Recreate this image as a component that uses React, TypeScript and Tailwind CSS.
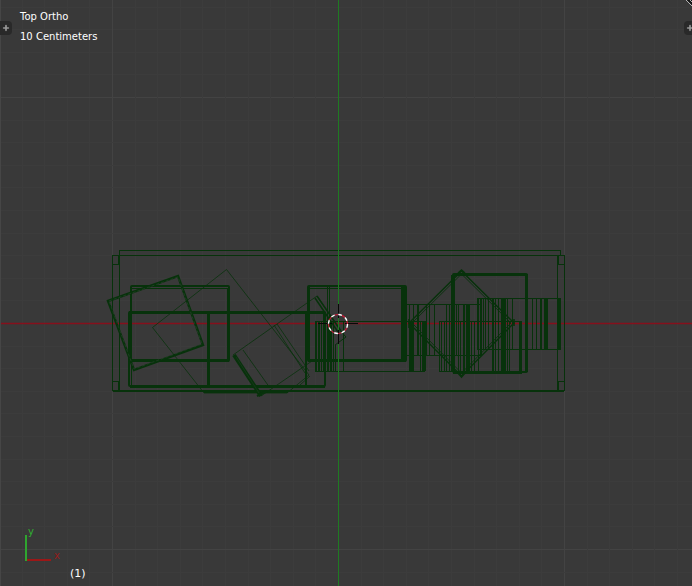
import { Plus } from 'lucide-react';

const WIRE = '#07320b';
const GRID = 22.6;
const CENTER = { x: 338.5, y: 323.5 };

type Box = [x: number, y: number, w: number, h: number];

const thinBoxes: Box[] = [
  [119.5, 250.5, 441, 5],
  [112.5, 255.5, 452, 135],
  [119.5, 255.5, 438, 135],
  [112.5, 255.5, 6, 9],
  [112.5, 381.5, 6, 9],
  [558.5, 255.5, 6, 9],
  [558.5, 381.5, 6, 9],
  [131.5, 288.5, 96, 71],
  [308.5, 288.5, 96, 71],
  [327.5, 286.5, 2, 74],
  [315.5, 321.5, 109, 50],
  [401.5, 304.5, 80, 51],
  [439.5, 321.5, 82, 50],
  [477.5, 298.5, 83, 51],
  [453.5, 275.5, 72, 97],
];

const thickBoxes: Box[] = [
  [131, 286, 98, 75],
  [129, 312, 196, 74],
  [308, 286, 98, 75],
  [453, 274, 74, 98],
];

// [x, top, bottom, width]
const bars: [number, number, number, number][] = [
  [208.5, 312, 386, 3],
  [131.5, 312, 386, 1],
  [305.5, 312, 386, 2],
  [309, 286, 361, 2],
  [403, 286, 361, 5],
  [316.5, 321, 371, 1],
  [318.5, 321, 371, 2],
  [321.5, 321, 371, 1],
  [324, 312, 371, 3],
  [327.5, 321, 371, 2],
  [330.5, 321, 371, 2],
  [333.5, 321, 371, 1],
  [335.5, 345, 371, 1],
  [343.5, 321, 371, 1],
  [406.5, 304, 356, 1],
  [409.5, 304, 371, 1],
  [412, 321, 371, 4],
  [413.5, 304, 356, 1],
  [417.5, 304, 356, 2],
  [420.5, 321, 371, 1],
  [424, 321, 371, 4],
  [426.5, 304, 356, 1],
  [429.5, 304, 356, 1],
  [434.5, 304, 356, 1],
  [441.5, 321, 371, 1],
  [444.5, 321, 371, 1],
  [446.5, 304, 371, 1],
  [449.5, 304, 371, 1],
  [452.5, 275, 371, 4],
  [456.5, 304, 356, 1],
  [458.5, 304, 371, 1],
  [460.5, 321, 371, 1],
  [464, 304, 371, 2],
  [467.5, 304, 371, 4],
  [471.5, 321, 371, 1],
  [474.5, 321, 371, 1],
  [478.5, 298, 371, 1],
  [480.5, 298, 356, 2],
  [483.5, 298, 349, 1],
  [485.5, 298, 349, 1],
  [488.5, 298, 349, 1],
  [492.5, 298, 371, 2],
  [495.5, 298, 371, 1],
  [498.5, 298, 371, 1],
  [501.5, 298, 371, 2],
  [504, 298, 371, 3],
  [507.5, 298, 371, 1],
  [512.5, 298, 349, 1],
  [509.5, 321, 371, 1],
  [520.5, 321, 371, 3],
  [526, 274, 372, 3],
  [532.5, 298, 349, 1],
  [536.5, 298, 349, 1],
  [540.5, 298, 349, 2],
  [544.5, 298, 349, 2],
  [547, 298, 349, 2],
  [558.5, 298, 349, 3],
];

function Grid() {
  const steps = Array.from({ length: 49 }, (_, i) => i - 24).filter((n) => n !== 0);
  return (
    <g shapeRendering="crispEdges">
      {steps.map((n) => (
        <g key={n} fill={n % 10 === 0 ? '#434343' : '#3c3c3c'}>
          <rect x={Math.floor(CENTER.x + n * GRID)} y="-300" width="1" height="1200" />
          <rect x="-300" y={Math.floor(CENTER.y + n * GRID)} width="1300" height="1" />
        </g>
      ))}
    </g>
  );
}

function Wireframe() {
  return (
    <g fill="none" stroke={WIRE}>
      <g shapeRendering="crispEdges">
        {thinBoxes.map(([x, y, width, height], i) => (
          <rect key={i} x={x} y={y} width={width} height={height} />
        ))}
        {bars.map(([x, top, bottom, width], i) => (
          <path key={i} d={`M${x} ${top}V${bottom}`} strokeWidth={width} />
        ))}
        <path d="M113 391H564" strokeWidth="2" />
        <path d="M129 312.500H325M130 360.500H229M308 360.500H406M130 386H325M453 372H522" strokeWidth="3" />
      </g>
      {thickBoxes.map(([x, y, width, height], i) => (
        <rect key={i} x={x} y={y} width={width} height={height} rx="1" strokeWidth="2" />
      ))}

      {/* tilted box on the left */}
      <path d="M108 301L178 276L203 345L134 370Z" strokeWidth="2.4" />
      <path d="M109 301L178 277L202 344L134 369Z" stroke="#2a402c" strokeWidth="0.7" strokeDasharray="3 2" />

      {/* large thin box and the narrow one leaning on it */}
      <path d="M226.500 269.500L152.500 327.500L204 393H287L309 375L226.500 269.500" strokeWidth="0.8" />
      <path d="M233 355L277 324L317 296L343 334M277 324L309 371M274 325L305 373M243 350L270 388M261 396L312 361M310 376L300 385" strokeWidth="0.8" />
      <path d="M204 392.500H288" />
      <path d="M234 355L261 396" strokeWidth="4" />
      <path d="M236 357L259 393" stroke="#1d3a20" strokeWidth="0.7" />
      <path d="M257 396L267 391" strokeWidth="2" />
      <path d="M317 296L341 331M315 298L338 332" strokeWidth="1.5" />
      <path d="M335 345L346 337L339 329" />

      {/* diamond on the right */}
      <path d="M461.500 271L409 323L461.500 376L514 323Z" strokeWidth="1.4" />
      <path d="M461.500 274L412 323L461.500 373L511 323Z" strokeWidth="0.9" />
      <path d="M458 273L461.500 270L465 273M458 373L461.500 377L465 373M409 319V328M514 319V326" strokeWidth="1.6" />
    </g>
  );
}

function Cursor3D() {
  return (
    <g fill="none">
      <path
        d="M338.500 304V318M338.500 330V344M318 323.500H332M345 323.500H358"
        stroke="#080808"
        shapeRendering="crispEdges"
      />
      <circle cx="338" cy="324" r="9.500" stroke="#c71c38" strokeWidth="1.2" strokeDasharray="3.730 3.730" strokeDashoffset="3.730" />
      <circle cx="338" cy="324" r="9.500" stroke="#ffffff" strokeWidth="1.4" strokeDasharray="3.730 3.730" />
    </g>
  );
}

function Viewport() {
  return (
    <svg
      className="absolute inset-0 h-full w-full"
      viewBox="0 0 692 586"
      preserveAspectRatio="xMidYMid slice"
      aria-hidden="true"
    >
      <Grid />
      <path d="M-300 323.500H1000" stroke="#86101c" strokeWidth="1.6" />
      <Wireframe />
      <rect x="338" y="-300" width="1" height="1200" fill="#1f7a22" shapeRendering="crispEdges" />
      <Cursor3D />
    </svg>
  );
}

function AxisGizmo() {
  return (
    <div className="relative h-9 w-10 text-[10px] leading-3">
      <svg className="absolute inset-0 h-full w-full" viewBox="0 0 40 36" aria-hidden="true">
        <path d="M6 34H31" stroke="#9c1717" strokeWidth="2" />
        <path d="M6 9V35" stroke="#2fa52f" strokeWidth="2" />
      </svg>
      <span className="absolute top-0 left-2 text-[#30b030]">y</span>
      <span className="absolute bottom-0 right-0 text-[#961c1c]">x</span>
    </div>
  );
}

export default function App() {
  return (
    <main className="relative flex h-screen flex-col justify-between overflow-hidden bg-[#393939] font-['DejaVu_Sans',sans-serif] text-[10px] text-white">
      <Viewport />
      <div className="absolute inset-y-0 left-0 w-px bg-[#464646]" />

      <header className="relative flex items-start justify-between pt-[7px]">
        <button
          aria-label="Show tool shelf"
          className="mt-3.5 flex h-3.5 w-3 items-center justify-center rounded-r bg-[#292929] text-[#999999]"
        >
          <Plus size={8} strokeWidth={5} />
        </button>
        <div className="ml-2 flex-1 leading-5">
          <p>Top Ortho</p>
          <p>10 Centimeters</p>
        </div>
        <button
          aria-label="Show properties"
          className="mt-3.5 flex h-3.5 w-2 items-center overflow-hidden rounded-l bg-[#292929] pl-0.5 text-[#999999]"
        >
          <Plus size={8} strokeWidth={5} className="shrink-0" />
        </button>
      </header>
      <svg className="absolute right-0 top-0 h-2 w-2" viewBox="0 0 8 8" aria-hidden="true">
        <path d="M3 0L8 5V0Z" fill="#151515" />
        <path d="M2 0L8 6M6 0L8 2" stroke="#b5b5b5" fill="none" />
      </svg>

      <footer className="relative px-5 pb-1">
        <AxisGizmo />
        <p className="pl-[50px] pt-1 text-[11px] leading-4">(1)</p>
      </footer>
    </main>
  );
}
